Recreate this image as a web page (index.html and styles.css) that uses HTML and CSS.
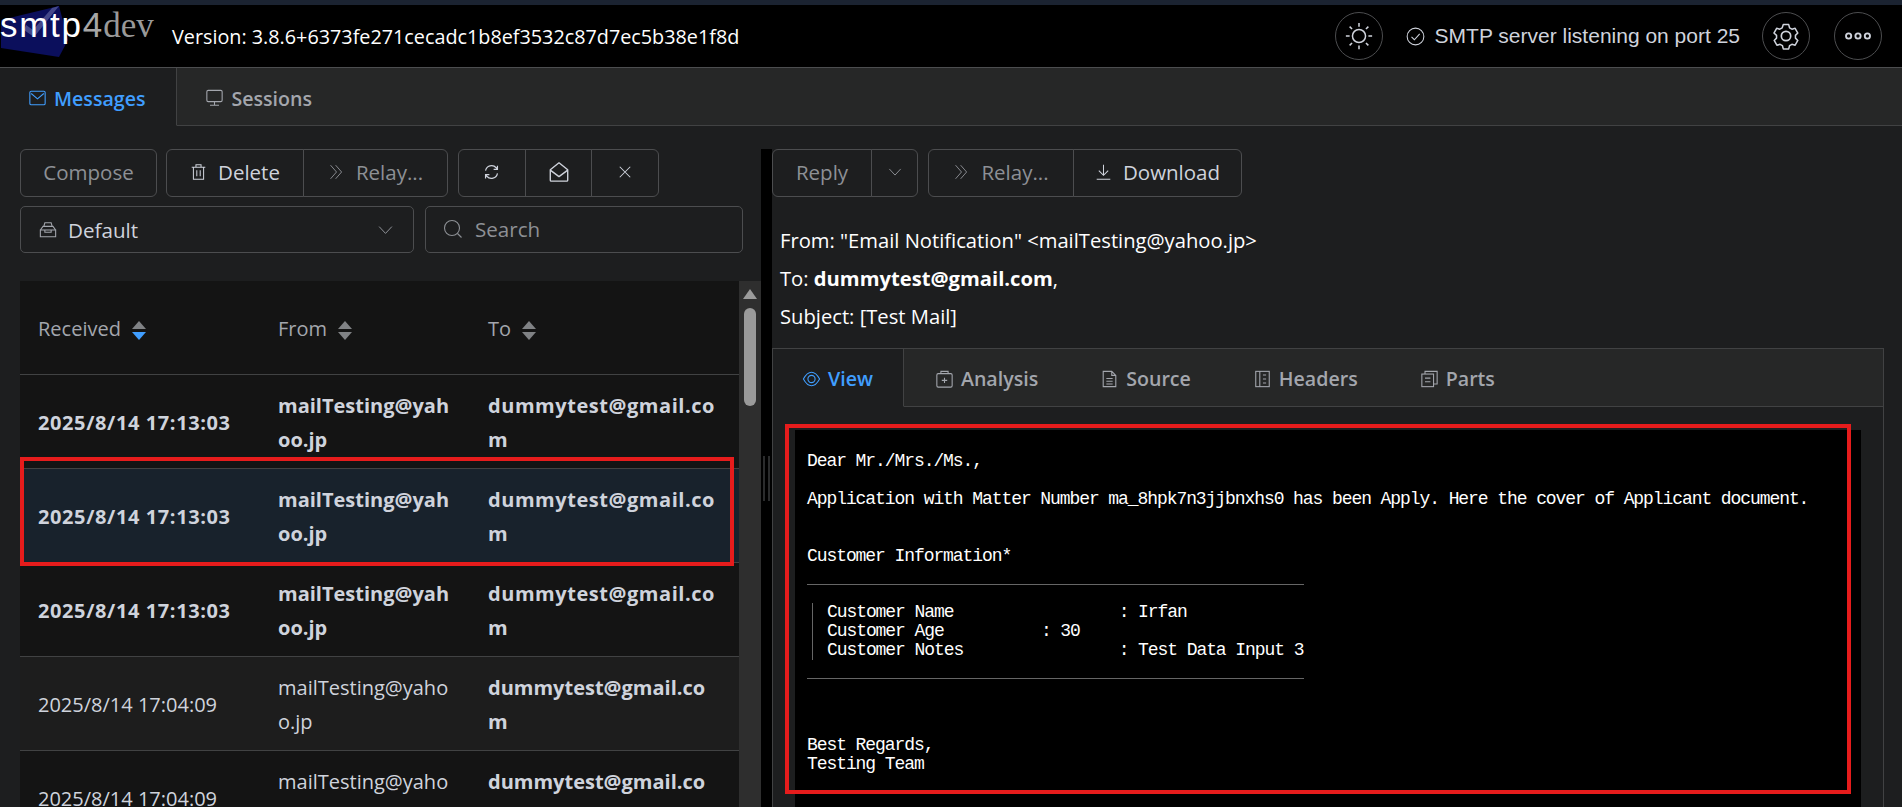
FILE: index.html
```html
<!DOCTYPE html>
<html lang="en">
<head>
    <meta charset="UTF-8">
    <meta name="viewport" content="width=device-width, initial-scale=1.0">
    <title>smtp4dev</title>
    <link rel="stylesheet" href="styles.css">
</head>
<body>
    <div class="top-strip"></div>

    <header class="app-header">
        <div class="logo">
            <svg class="logo-mark" viewBox="0 0 70 60"><polygon points="1,15 59,1 68,35 59,52 1,43" fill="#0b0f5c"/><path d="M24 25 L34 32 L59 1 L52 3 L33 25 L26 20 Z" fill="#44488a"/></svg>
            <span class="logo-smtp">smtp</span><span class="logo-four">4</span><span class="logo-dev">dev</span>
        </div>
        <span class="version">Version: 3.8.6+6373fe271cecadc1b8ef3532c87d7ec5b38e1f8d</span>
        <div class="header-right">
            <button class="round-btn">
                <svg class="icon-lg" viewBox="0 0 32 32" fill="none" stroke="currentColor" stroke-width="1.6"><circle cx="16" cy="16" r="7"/><path d="M16 2v4M16 26v4M2 16h4M26 16h4M6 6l2.6 2.6M23.4 23.4L26 26M6 26l2.6-2.6M23.4 8.6L26 6"/></svg>
            </button>
            <span class="server-status">
                <svg class="icon-status" viewBox="0 0 20 20" fill="none" stroke="currentColor" stroke-width="1.1"><circle cx="10" cy="10" r="8.8"/><path d="M5.8 10.4l3 3 5.6-6.2"/></svg>
                SMTP server listening on port 25
            </span>
            <button class="round-btn">
                <svg class="icon-lg" viewBox="0 0 32 32" fill="none" stroke="currentColor" stroke-width="1.8" stroke-linejoin="round"><circle cx="16" cy="16" r="5"/><path d="M12.8 2.5h6.4l1 3.8 2.8 1.6 3.8-1 3.2 5.6-2.8 2.8v3.2l2.8 2.8-3.2 5.6-3.8-1-2.8 1.6-1 3.8h-6.4l-1-3.8-2.8-1.6-3.8 1-3.2-5.6 2.8-2.8v-3.2L1.7 12.5l3.2-5.6 3.8 1 2.8-1.6z" transform="translate(1.6 1.6) scale(.9)"/></svg>
            </button>
            <button class="round-btn">
                <svg class="icon-lg" viewBox="0 0 32 32" fill="none" stroke="currentColor" stroke-width="2"><circle cx="6" cy="16" r="2.8"/><circle cx="16" cy="16" r="2.8"/><circle cx="26" cy="16" r="2.8"/></svg>
            </button>
        </div>
    </header>

    <nav class="tabs main-tabs">
        <div class="tab active">
            <svg class="icon-tab" viewBox="0 0 20 20" fill="none" stroke="currentColor" stroke-width="1.2"><rect x="1.5" y="2.5" width="17" height="15" rx="1.5"/><path d="M3 5l7 6 7-6"/></svg>
            Messages
        </div>
        <div class="tab">
            <svg class="icon-tab" viewBox="0 0 20 20" fill="none" stroke="currentColor" stroke-width="1.2"><rect x="1.5" y="1.5" width="17" height="12.5" rx="1.5"/><path d="M10 14v4M5 18h10"/></svg>
            Sessions
        </div>
        <div class="tab-fill"></div>
    </nav>

    <main class="content">
        <section class="left-pane">
            <div class="toolbar">
                <button class="btn disabled w-compose">Compose</button>
                <div class="btn-group">
                    <button class="btn w-delete">
                        <svg class="icon" viewBox="0 0 20 20" fill="none" stroke="currentColor" stroke-width="1.2"><path d="M2 4.5h16M7 4.5V1.5h6v3M4 4.5v14h12v-14M8 8v7M12 8v7"/></svg>
                        Delete
                    </button>
                    <button class="btn disabled w-relay">
                        <svg class="icon" viewBox="0 0 20 20" fill="none" stroke="currentColor" stroke-width="1.1"><path d="M3 2l7 8-7 8M9 2l7 8-7 8"/></svg>
                        Relay...
                    </button>
                </div>
                <div class="btn-group">
                    <button class="btn w-icon">
                        <svg class="icon" viewBox="0 0 20 20" fill="none" stroke="currentColor" stroke-width="1.4"><path d="M3 8.5A7.2 7.2 0 0 1 15.5 5l1.5 2M17 11.5A7.2 7.2 0 0 1 4.5 15L3 13M17 2.5V7h-4.5M3 17.5V13h4.5"/></svg>
                    </button>
                    <button class="btn w-icon">
                        <svg class="icon-mid" viewBox="0 0 24 24" fill="none" stroke="currentColor" stroke-width="1.5" stroke-linejoin="round"><path d="M2.5 9.5L12 2l9.5 7.5V21a1 1 0 0 1-1 1h-17a1 1 0 0 1-1-1z"/><path d="M2.5 10l9.5 7 9.5-7"/></svg>
                    </button>
                    <button class="btn w-icon">
                        <svg class="icon-sm" viewBox="0 0 16 16" fill="none" stroke="currentColor" stroke-width="1.2"><path d="M2 2l12 12M14 2L2 14"/></svg>
                    </button>
                </div>
            </div>
            <div class="filter-row">
                <div class="select-box">
                    <svg class="icon inbox-icon" viewBox="0 0 20 20" fill="none" stroke="currentColor" stroke-width="1.2"><path d="M1.5 10v7.5h17V10zM1.5 10l3-4h11l3 4M6.5 10v2.5h7V10M5.5 5.5l1-3.5h7l1 3.5"/></svg>
                    <span class="select-value">Default</span>
                    <svg class="icon chevron" viewBox="0 0 20 20" fill="none" stroke="currentColor" stroke-width="1"><path d="M2.5 6l7.5 8 7.5-8"/></svg>
                </div>
                <div class="search-box">
                    <svg class="icon-search" viewBox="0 0 20 20" fill="none" stroke="currentColor" stroke-width="1.1"><circle cx="9" cy="9" r="7.5"/><path d="M14.5 14.5l4 4"/></svg>
                    Search
                </div>
            </div>
            <div class="table-wrap">
                <table class="message-table">
                    <colgroup><col class="col-received"><col class="col-from"><col></colgroup>
                    <thead>
                        <tr>
                            <th>Received<span class="sort sort-desc"><i></i><i></i></span></th>
                            <th>From<span class="sort"><i></i><i></i></span></th>
                            <th>To<span class="sort"><i></i><i></i></span></th>
                        </tr>
                    </thead>
                    <tbody>
                        <tr class="unread">
                            <td>2025/8/14 17:13:03</td>
                            <td>mailTesting@yah<br>oo.jp</td>
                            <td class="to">dummytest@gmail.co<br>m</td>
                        </tr>
                        <tr class="unread current">
                            <td>2025/8/14 17:13:03</td>
                            <td>mailTesting@yah<br>oo.jp</td>
                            <td class="to">dummytest@gmail.co<br>m</td>
                        </tr>
                        <tr class="unread">
                            <td>2025/8/14 17:13:03</td>
                            <td>mailTesting@yah<br>oo.jp</td>
                            <td class="to">dummytest@gmail.co<br>m</td>
                        </tr>
                        <tr class="stripe">
                            <td>2025/8/14 17:04:09</td>
                            <td>mailTesting@yaho<br>o.jp</td>
                            <td class="to">dummytest@gmail.co<br>m</td>
                        </tr>
                        <tr>
                            <td>2025/8/14 17:04:09</td>
                            <td>mailTesting@yaho<br>o.jp</td>
                            <td class="to">dummytest@gmail.co<br>m</td>
                        </tr>
                    </tbody>
                </table>
                <div class="scrollbar">
                    <div class="scroll-arrow"></div>
                    <div class="scroll-thumb"></div>
                </div>
            </div>
        </section>

        <div class="splitter"><i></i><i></i></div>

        <section class="right-pane">
            <div class="toolbar">
                <div class="btn-group">
                    <button class="btn disabled w-reply">Reply</button>
                    <button class="btn disabled w-caret">
                        <svg class="icon-sm" viewBox="0 0 16 16" fill="none" stroke="currentColor" stroke-width="1.1"><path d="M1.5 4.5L8 11.5l6.5-7"/></svg>
                    </button>
                </div>
                <div class="btn-group">
                    <button class="btn disabled w-relay2">
                        <svg class="icon" viewBox="0 0 20 20" fill="none" stroke="currentColor" stroke-width="1.1"><path d="M3 2l7 8-7 8M9 2l7 8-7 8"/></svg>
                        Relay...
                    </button>
                    <button class="btn w-download">
                        <svg class="icon" viewBox="0 0 20 20" fill="none" stroke="currentColor" stroke-width="1.2"><path d="M10 1.5v12M4.5 8.5l5.5 5.5 5.5-5.5M2 18.5h16"/></svg>
                        Download
                    </button>
                </div>
            </div>

            <div class="mail-head">
                <div>From: "Email Notification" &lt;mailTesting@yahoo.jp&gt;</div>
                <div>To: <b>dummytest@gmail.com</b>,</div>
                <div>Subject: [Test Mail]</div>
            </div>

            <div class="mail-panel">
                <nav class="tabs mail-tabs">
                    <div class="tab active">
                        <svg class="icon-tab" viewBox="0 0 20 20" fill="none" stroke="currentColor" stroke-width="1.2"><path d="M1 10c3-5.5 6-7.5 9-7.5s6 2 9 7.5c-3 5.5-6 7.5-9 7.5s-6-2-9-7.5z"/><circle cx="10" cy="10" r="4"/></svg>
                        View
                    </div>
                    <div class="tab">
                        <svg class="icon-tab" viewBox="0 0 20 20" fill="none" stroke="currentColor" stroke-width="1.2"><rect x="1.5" y="4" width="17" height="15" rx="1.5"/><path d="M6 4V1.5h8V4M10 8.5v6M7 11.5h6"/></svg>
                        Analysis
                    </div>
                    <div class="tab">
                        <svg class="icon-tab" viewBox="0 0 20 20" fill="none" stroke="currentColor" stroke-width="1.2"><path d="M3 1.5h9.5l4.5 4.5v12.5H3zM12.5 1.5V6H17M6.5 9.5h7M6.5 12.5h7M6.5 15.5h7"/></svg>
                        Source
                    </div>
                    <div class="tab">
                        <svg class="icon-tab" viewBox="0 0 20 20" fill="none" stroke="currentColor" stroke-width="1.2"><rect x="2.5" y="1.5" width="15" height="17"/><path d="M7 1.5v17M10.5 5.5h3.5M10.5 10h3.5M10.5 14.5h3.5"/></svg>
                        Headers
                    </div>
                    <div class="tab">
                        <svg class="icon-tab" viewBox="0 0 20 20" fill="none" stroke="currentColor" stroke-width="1.2"><rect x="1.5" y="4.5" width="13" height="14"/><path d="M5 4.5v-3h13.5v14h-4M5 9h6M5 13h6"/></svg>
                        Parts
                    </div>
                    <div class="tab-fill"></div>
                </nav>
                <div class="mail-body">
                    <div class="mail-frame">
                        <p class="mail-line gap">Dear Mr./Mrs./Ms.,</p>
                        <p class="mail-line gap-double">Application with Matter Number ma_8hpk7n3jjbnxhs0 has been Apply. Here the cover of Applicant document.</p>
                        <p class="mail-line">Customer Information*</p>
                        <hr class="mail-rule">
                        <pre class="mail-table">Customer Name                 : Irfan
Customer Age          : 30
Customer Notes                : Test Data Input 3</pre>
                        <hr class="mail-rule">
                        <p class="mail-line regards">Best Regards,<br>Testing Team</p>
                    </div>
                </div>
            </div>
        </section>
    </main>

    <!-- red markers drawn over the screenshot -->
    <div class="marker marker-row"></div>
    <div class="marker marker-mail"></div>
</body>
</html>
```

FILE: styles.css
```css
* {
    box-sizing: border-box;
}

html, body {
    height: 100%;
    margin: 0;
    overflow: hidden;
}

body {
    position: relative;
    display: flex;
    flex-direction: column;
    font-family: "Open Sans", "Noto Sans", sans-serif;
    font-size: 20px;
    color: #cfd3dc;
    background-color: #1d1e1f;
}

button {
    font: inherit;
    color: inherit;
    background: none;
    border: 0;
}

.top-strip {
    height: 5px;
    background-color: #1b2331;
}

/* header */
.app-header {
    display: flex;
    align-items: center;
    height: 63px;
    padding-right: 20px;
    background-color: #000;
    border-bottom: 1px solid #4c4d4f;
    color: #fff;
}

.logo {
    position: relative;
    display: flex;
    align-items: baseline;
    width: 172px;
    height: 62px;
    font-family: "Liberation Sans", sans-serif;
}

.logo-mark {
    position: absolute;
    left: 0;
    top: 0;
    width: 70px;
    height: 60px;
}

.logo-smtp {
    position: relative;
    font-size: 35px;
    line-height: 40px;
    letter-spacing: 1.7px;
    color: #fff;
}

.logo-four {
    position: relative;
    font-size: 35px;
    line-height: 40px;
    color: #a6a6a6;
}

.logo-dev {
    position: relative;
    margin-left: 1px;
    font-family: "Liberation Serif", serif;
    font-size: 35px;
    line-height: 40px;
    color: #999;
}

.version {
    font-size: 19.8px;
}

.header-right {
    display: flex;
    align-items: center;
    margin-left: auto;
    color: #cfd3dc;
}

.round-btn {
    display: flex;
    align-items: center;
    justify-content: center;
    width: 48px;
    height: 48px;
    margin-left: 24px;
    padding: 0;
    border: 1px solid #4c4d4f;
    border-radius: 50%;
}

.server-status {
    display: flex;
    align-items: center;
    gap: 10px;
    margin-left: 23px;
    font-family: "Liberation Sans", sans-serif;
    font-size: 21px;
}

.server-status + .round-btn {
    margin-left: 22px;
}

/* icons */
.icon {
    flex: none;
    width: 17px;
    height: 18px;
}

.icon-tab {
    flex: none;
    width: 19px;
    height: 18px;
}

.icon-lg {
    width: 30px;
    height: 30px;
}

.icon-mid {
    width: 22px;
    height: 22px;
}

.icon-sm {
    width: 14px;
    height: 14px;
}

.icon-status {
    width: 19px;
    height: 19px;
}

.icon-search {
    width: 20px;
    height: 20px;
}

/* tabs */
.tabs {
    display: flex;
    background-color: #262727;
    font-size: 19.6px;
}

.main-tabs {
    height: 58px;
}

.tab {
    display: flex;
    align-items: center;
    gap: 7px;
    padding: 3px 31px 0 28px;
    color: #a3a6ad;
    font-weight: 600;
    border-bottom: 1px solid #414243;
}

.tab.active {
    color: #409eff;
    background-color: #1d1e1f;
    border-right: 1px solid #414243;
    border-bottom-color: transparent;
}

.tab-fill {
    flex: 1;
    border-bottom: 1px solid #414243;
}

/* page columns */
.content {
    display: flex;
    flex: 1;
    min-height: 0;
}

.left-pane {
    display: flex;
    flex-direction: column;
    width: 761px;
    padding-top: 23px;
    padding-left: 20px;
}

.splitter {
    display: flex;
    flex: none;
    justify-content: center;
    align-items: center;
    gap: 3px;
    width: 11px;
    margin-top: 23px;
    background-color: #000;
}

.splitter i {
    width: 2px;
    height: 45px;
    background-color: #2b2c2d;
}

.right-pane {
    flex: 1;
    min-width: 0;
    padding: 23px 18px 0 0;
}

/* buttons */
.toolbar {
    display: flex;
    gap: 10px;
    height: 48px;
}

.btn-group {
    display: flex;
}

.btn {
    display: flex;
    align-items: center;
    justify-content: center;
    gap: 11px;
    height: 48px;
    padding: 0 0 2px;
    font-size: 20.5px;
    border: 1px solid #4c4d4f;
    border-radius: 6px;
    background-color: #1d1e1f;
}

.btn-group .btn {
    border-radius: 0;
    margin-left: -1px;
}

.btn-group .btn:first-child {
    border-radius: 6px 0 0 6px;
    margin-left: 0;
}

.btn-group .btn:last-child {
    border-radius: 0 6px 6px 0;
}

.btn.disabled {
    color: #8d9095;
}

.w-compose { width: 137px; margin-right: -1px; }
.w-delete { width: 138px; }
.w-relay { width: 145px; }
.w-icon { width: 67.7px; }
.w-reply { width: 100px; }
.w-caret { width: 47px; }
.w-relay2 { width: 146px; }
.w-download { width: 169px; }

/* filter */
.filter-row {
    display: flex;
    gap: 11px;
    height: 47px;
    margin-top: 9px;
    margin-right: 18px;
    font-size: 20.6px;
}

.select-box, .search-box {
    display: flex;
    align-items: center;
    border: 1px solid #4c4d4f;
    border-radius: 5px;
}

.select-box {
    width: 394px;
    padding: 0 19px 0 18px;
}

.select-value {
    margin-left: 11px;
}

.chevron {
    margin-left: auto;
    color: #a3a6ad;
}

.inbox-icon {
    width: 18px;
    height: 18px;
    color: #a3a6ad;
}

.search-box {
    flex: 1;
    gap: 12px;
    padding: 0 0 2px 17px;
    color: #8d9095;
}

/* message list */
.table-wrap {
    display: flex;
    flex: 1;
    min-height: 0;
    margin-top: 28px;
    overflow: hidden;
}

.message-table {
    flex: none;
    width: 719px;
    height: 0;
    table-layout: fixed;
    border-collapse: collapse;
    background-color: #141414;
}

.col-received {
    width: 240px;
}

.col-from {
    width: 210px;
}

th, td {
    padding: 0 0 0 18px;
    text-align: left;
    white-space: nowrap;
    border-bottom: 1px solid #414243;
}

th {
    height: 93px;
    padding-top: 3px;
    font-weight: 400;
    color: #a3a6ad;
}

td {
    height: 94px;
    padding-top: 3px;
    line-height: 34px;
}

tr.unread td, td.to {
    font-weight: 700;
}

tr.unread td:first-child {
    letter-spacing: 0.6px;
}

tr.unread td.to {
    letter-spacing: 0.55px;
}

tr.current td {
    background-color: #18222c;
}

tr.stripe td {
    background-color: #1d1d1d;
}

.sort {
    display: inline-flex;
    flex-direction: column;
    gap: 3px;
    margin-left: 11px;
    vertical-align: middle;
}

.sort i {
    width: 0;
    height: 0;
    border-left: 7px solid transparent;
    border-right: 7px solid transparent;
    border-bottom: 8px solid #808285;
}

.sort i:last-child {
    border-bottom: 0;
    border-top: 8px solid #808285;
}

.sort-desc i:last-child {
    border-top-color: #409eff;
}

.scrollbar {
    flex: none;
    width: 22px;
    background-color: #2e2e2e;
}

.scroll-arrow {
    width: 0;
    height: 0;
    margin: 8px auto 0;
    border-left: 7px solid transparent;
    border-right: 7px solid transparent;
    border-bottom: 10px solid #9a9a9a;
}

.scroll-thumb {
    width: 12px;
    height: 98px;
    margin: 9px auto 0;
    border-radius: 6px;
    background-color: #9a9a9a;
}

/* message view */
.mail-head {
    margin-top: 24px;
    padding-left: 8px;
    font-size: 20.2px;
    line-height: 38px;
    color: #fff;
}

.mail-panel {
    margin-top: 13px;
    height: 600px;
    border: 1px solid #414243;
}

.mail-tabs {
    height: 58px;
}

.mail-tabs .tab {
    padding: 2px 31px 0;
}

.mail-tabs .tab.active {
    padding: 2px 30px 0 29px;
}

.mail-body {
    padding: 23px 22px 0;
}

.mail-frame {
    height: 500px;
    padding: 22px 12px 0;
    background-color: #000;
    color: #fff;
    font-family: "Liberation Mono", monospace;
    font-size: 18px;
    letter-spacing: -1.08px;
    line-height: 19px;
}

.mail-line {
    margin: 0;
}

.mail-line.gap {
    margin-bottom: 19px;
}

.mail-line.gap-double {
    margin-bottom: 38px;
}

.mail-rule {
    width: 497px;
    height: 1px;
    margin: 18px 0;
    border: 0;
    background-color: #666;
}

.mail-table {
    margin: 0 0 0 5px;
    padding-left: 14px;
    font: inherit;
    border-left: 1px solid #666;
}

.regards {
    margin-top: 57px;
}

/* red annotation boxes */
.marker {
    position: absolute;
    border: 4px solid #e61c1c;
}

.marker-row {
    left: 20px;
    top: 457px;
    width: 714px;
    height: 109px;
}

.marker-mail {
    left: 785px;
    top: 424px;
    width: 1066px;
    height: 370px;
}
```
